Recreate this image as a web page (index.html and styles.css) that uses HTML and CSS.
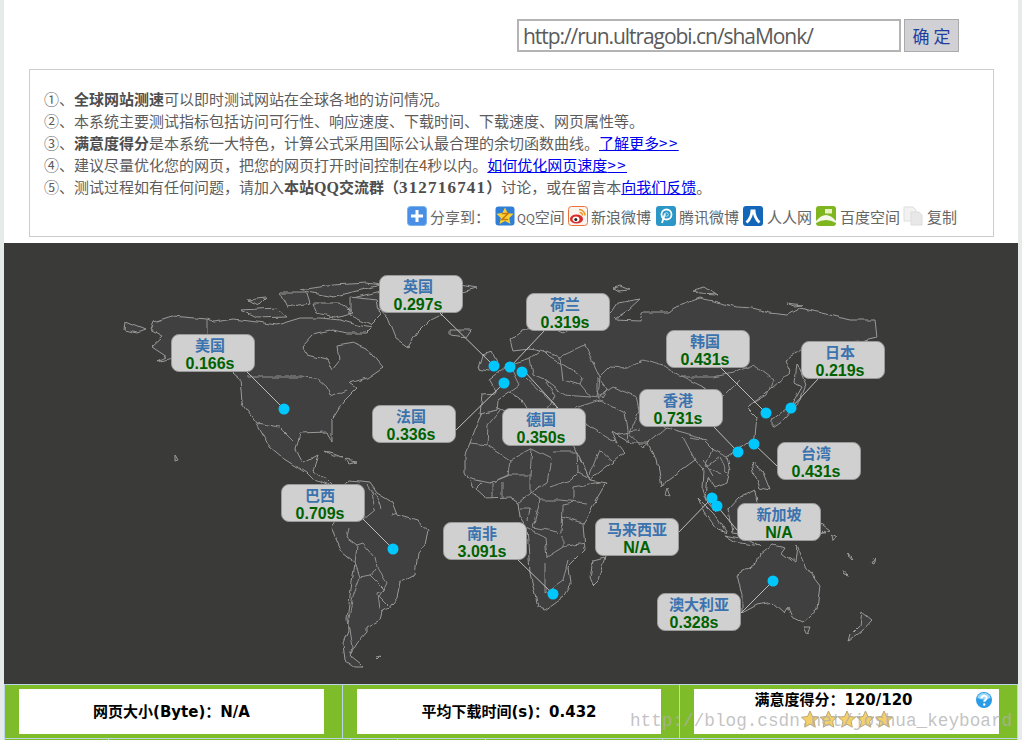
FILE: index.html
```html
<!DOCTYPE html>
<html lang="zh">
<head>
<meta charset="utf-8">
<title>全球网站测速</title>
<link rel="stylesheet" href="styles.css">
</head>
<body>
<main class="page">
  <form class="search">
    <input class="url" type="text" value="http://run.ultragobi.cn/shaMonk/">
    <button class="go" type="button">确 定</button>
  </form>

  <section class="info">
    <p>①、<b>全球网站测速</b>可以即时测试网站在全球各地的访问情况。</p>
    <p>②、本系统主要测试指标包括访问可行性、响应速度、下载时间、下载速度、网页属性等。</p>
    <p>③、<b>满意度得分</b>是本系统一大特色，计算公式采用国际公认最合理的余切函数曲线。<a href="#">了解更多<span class="gt">&gt;&gt;</span></a></p>
    <p>④、建议尽量优化您的网页，把您的网页打开时间控制在<b class="four">4</b>秒以内。<a href="#">如何优化网页速度<span class="gt">&gt;&gt;</span></a></p>
    <p>⑤、测试过程如有任何问题，请加入<b>本站<span class="ser">QQ</span>交流群（<span class="ser qq">312716741</span>）</b>讨论，或在留言本<a href="#">向我们反馈</a>。</p>
    <div class="share">
      <svg class="ic" viewBox="0 0 20 20"><rect x=".5" y=".5" width="19" height="19" rx="3" fill="#4a8fe6" stroke="#7ab0ee"/><path d="M10 4v12M4 10h12" stroke="#fff" stroke-width="3"/></svg>
      <span class="st s1">分享到：</span>
      <svg class="ic" viewBox="0 0 20 20"><rect x=".5" y=".5" width="19" height="19" rx="3" fill="#2f7fd6"/><path d="M10 1.500l2.600 5.600 6 .7-4.400 4.100 1.200 6L10 15l-5.400 2.900 1.200-6L1.400 7.800l6-.7z" fill="#fbd033"/><path d="M7 7.500h6l-6 6h6" fill="none" stroke="#c6790e" stroke-width="1.600"/></svg>
      <span class="st s2"><small>QQ</small>空间</span>
      <svg class="ic" viewBox="0 0 20 20"><rect x=".5" y=".5" width="19" height="19" rx="3" fill="#fbf3ee" stroke="#e8743b"/><ellipse cx="8.500" cy="13" rx="6.500" ry="4.600" fill="#d92a2a"/><ellipse cx="8" cy="13.300" rx="3.400" ry="2.700" fill="#fff"/><circle cx="7.800" cy="13.500" r="1.500" fill="#222"/><path d="M11 3.500a6 6 0 0 1 6 6M11.500 6.500a3 3 0 0 1 3 3" fill="none" stroke="#f09a28" stroke-width="1.500"/></svg>
      <span class="st s3">新浪微博</span>
      <svg class="ic" viewBox="0 0 20 20"><rect width="20" height="20" rx="3" fill="#2a97c6"/><path d="M6 17l3-9.500" stroke="#fff" stroke-width="1.800"/><circle cx="10.500" cy="8.500" r="5" fill="none" stroke="#fff" stroke-width="1.800"/><circle cx="10.500" cy="8.500" r="1.800" fill="none" stroke="#bfe6f5"/></svg>
      <span class="st s4">腾讯微博</span>
      <svg class="ic" viewBox="0 0 20 20"><rect width="20" height="20" rx="3" fill="#1467b8"/><path d="M9 3.500C9 9 7.500 13 3.500 16.500M11 3.500C11 9 12.500 13 16.500 16.500" fill="none" stroke="#fff" stroke-width="2.800"/></svg>
      <span class="st s5">人人网</span>
      <svg class="ic" viewBox="0 0 20 20"><rect width="20" height="20" rx="3" fill="#7fb51e"/><path d="M0 15q5-6 10-6t10 6v2q-5-3-10-3T0 17z" fill="#f4f8ea"/><rect x="9" y="3" width="7" height="4.500" fill="#e6f2c4"/></svg>
      <span class="st s6">百度空间</span>
      <svg class="ic" viewBox="0 0 20 20"><path d="M1 1h9l3 3v11H1z" fill="#f2f2f2" stroke="#ddd"/><path d="M8 6h8l3 3v10H8z" fill="#e8e8e8" stroke="#ddd"/></svg>
      <span class="st s7">复制</span>
    </div>
  </section>

  <section class="map">
    <svg class="world" viewBox="4 243 1014 441">
      <defs>
        <filter id="rough" filterUnits="userSpaceOnUse" x="4" y="243" width="1014" height="441" color-interpolation-filters="sRGB">
          <feTurbulence type="fractalNoise" baseFrequency=".09" numOctaves="2" seed="4" result="n"/>
          <feDisplacementMap in="SourceGraphic" in2="n" scale="5" xChannelSelector="R" yChannelSelector="G"/>
          <feGaussianBlur stdDeviation=".25"/>
        </filter>
      </defs>
      <g filter="url(#rough)">
      <g class="land">
        <path d="M153 322L172 316L207 319L215 322L233 319L257 322L277 325L300 318L320 318L340 320L357 325L372 328L367 333L347 333L333 330L313 335L302 347L307 355L327 360L332 370L340 360L338 345L353 342L367 348L383 367L367 378L350 383L357 388L343 402L332 420L332 443L327 432L300 433L296 450L303 463L318 455L313 470L327 480L335 488L327 484L312 478L307 473L282 457L270 447L257 423L242 403L240 378L233 372L210 350L157 362L167 357L152 347L163 337L150 330Z"/>
        <path d="M350 481L370 483L377 493L392 502L397 515L417 521L428 530L425 545L418 553L415 575L400 583L397 597L388 608L382 612L380 620L367 627L367 632L358 642L350 655L360 663L364 667L355 667L345 660L343 643L348 630L347 617L355 563L342 553L331 527L337 518L335 490Z"/>
        <path d="M485 403L470 443L465 455L465 472L473 487L485 498L510 497L518 502L520 517L527 528L530 573L538 608L545 610L563 597L570 585L568 567L585 550L583 523L587 517L607 483L590 480L577 453L570 433L555 418L530 415L502 410Z"/>
        <path d="M510 340L523 330L545 325L563 333L585 322L606 318L612 312L618 303L640 299L628 310L614 320L640 321L643 312L668 312L673 308L700 298L717 302L737 307L753 308L770 313L787 315L800 308L830 315L850 320L875 320L877 338L860 342L830 344L812 345L800 350L785 360L790 372L778 383L760 398L747 407L757 417L755 437L738 450L727 457L730 470L727 483L715 488L708 477L706 497L716 512L708 503L703 490L704 470L695 460L668 480L662 488L657 460L647 443L630 443L612 432L617 443L625 452L613 462L590 480L577 453L565 428L558 412L548 410L540 412L536 420L530 408L533 420L520 398L510 392L498 400L497 410L480 414L482 394L497 393L489 380L500 372L510 364L530 358L540 350L530 348L513 350Z"/>
        <path d="M737 575L757 563L760 555L773 545L785 548L782 553L795 563L797 545L805 565L820 585L817 610L803 622L792 617L788 608L785 613L773 602L757 605L742 613L742 595Z"/>
        <path d="M385 290L460 285L477 288L462 292L450 305L440 315L430 320L417 333L408 347L395 338L387 318L380 310L353 298Z"/>
        <path d="M605 557L598 580L593 585L590 577L593 560Z"/>
        <path d="M450 330L472 330L467 337L450 335ZM492 352L497 362L490 370L478 368L482 355ZM125 322L145 330L137 333L124 330ZM247 300L267 298L260 305ZM240 310L277 308L287 317L257 318ZM280 293L307 293L310 303L287 307ZM300 290L333 285L367 283L380 285L333 297L313 293ZM313 303L340 303L353 313L333 317L317 313ZM350 297L377 300L380 315L370 325L350 315ZM797 363L795 383L802 387L793 403L772 420L772 427L785 418L800 400L806 385ZM698 498L715 515L727 533L718 530L704 512ZM728 510L740 497L755 490L758 510L745 535L732 533ZM724 535L750 540L760 546L735 542ZM752 462L762 470L770 490L760 488L755 475ZM862 612L872 620L863 630L848 642L850 635L860 625ZM803 627L810 627L807 635ZM770 520L810 515L830 530L810 538L785 530ZM325 450L343 457L333 456ZM345 460L357 462L348 464ZM613 288L620 286L630 290L618 291ZM692 290L705 287L717 295L700 294ZM787 303L803 305L795 306ZM823 530L826 533L822 533ZM831 535L836 538L832 541ZM848 553L852 559L849 558ZM871 564L875 558L873 565ZM843 570L850 576L845 575ZM376 657L381 656L378 659ZM175 455L178 460L175 461Z"/>
      </g>
      <path class="borders" d="M207 319V334M247 377H300L317 378L327 387L330 397L347 390M257 423L280 427L293 440M348 528L346 537L357 545L363 543L375 557L377 567L387 583L380 597L388 605M357 545L355 563L360 577L370 575L375 568M360 577L352 600L348 623L352 647L350 657M370 575L378 583L385 590L378 593L380 610M375 493L380 502L382 508M367 485L372 492L375 510L363 520M392 515L397 513M487 445L510 460L532 448M510 460L508 475L530 475L532 448M532 448L552 458L548 483L530 493M552 452H577L578 472L570 480L550 487M467 478L490 483L508 475M493 483V498M502 483V497M530 475V493L518 503M540 500H560L587 503M573 487V500M540 500L533 527L562 533L563 505L573 503M562 517L583 523M527 528L545 537L547 558M545 563V593L563 580L568 560M547 557L563 547L585 543M563 537V547M520 508H530L528 522M600 377L610 367L627 368L643 359L663 365L682 377L713 377L733 373L753 365L773 380L767 395L747 407M682 377L723 397L740 380M640 410L630 433M667 428L700 437L713 450L727 457M600 377L598 397L613 387L637 397L640 410L667 428M600 400L625 413L628 430L627 443M628 433L643 447L667 427M683 437L695 460M703 460L713 477M707 467L720 457L728 473M597 377L607 390L602 398L597 390ZM543 350L550 357L567 367L583 377L580 385L590 397L600 398M525 377L557 407M530 358L533 375L545 380L555 395L548 410M560 357L563 380L580 385M510 364L520 385L510 392M577 425L587 425L617 443M587 425L578 412L558 412M590 475L600 450L613 462M667 488L670 497L665 495ZM540 350L560 357L585 345L600 377M545 380L565 395L590 397M575 408L600 400M615 435L640 430M650 405L680 395L700 415L723 397M690 437L708 440M712 450L705 467L722 475M470 443L487 445L488 425L500 410M510 475L490 483M475 490L482 483M540 500L530 493M578 472L590 478M573 487L600 482"/>
      </g>
      <g class="leader">
        <path d="M247 372L284 409M440 313L494 366M545 330L510 367M525 372L558 408M456 430L504 383M721 368L766 413M818 379L791 408M713 426L738 452M777 466L754 444M363 519L393 549M518 560L553 594M678 533L712 498M737 530L717 506M741 613L773 581"/>
      </g>
      <g class="pin">
        <circle cx="284" cy="409" r="5.500"/><circle cx="494" cy="366" r="5.500"/><circle cx="510" cy="367" r="5.500"/><circle cx="522" cy="372" r="5.500"/><circle cx="504" cy="383" r="5.500"/><circle cx="791" cy="408" r="5.500"/><circle cx="766" cy="413" r="5.500"/><circle cx="738" cy="452" r="5.500"/><circle cx="754" cy="444" r="5.500"/><circle cx="393" cy="549" r="5.500"/><circle cx="553" cy="594" r="5.500"/><circle cx="712" cy="498" r="5.500"/><circle cx="717" cy="506" r="5.500"/><circle cx="773" cy="581" r="5.500"/>
      </g>
    </svg>
    <div class="tag us"><b>美国</b><i>0.166s</i></div>
    <div class="tag uk"><b>英国</b><i>0.297s</i></div>
    <div class="tag nl"><b>荷兰</b><i>0.319s</i></div>
    <div class="tag fr"><b>法国</b><i>0.336s</i></div>
    <div class="tag de"><b>德国</b><i>0.350s</i></div>
    <div class="tag kr"><b>韩国</b><i>0.431s</i></div>
    <div class="tag jp"><b>日本</b><i>0.219s</i></div>
    <div class="tag hk"><b>香港</b><i>0.731s</i></div>
    <div class="tag tw"><b>台湾</b><i>0.431s</i></div>
    <div class="tag br"><b>巴西</b><i>0.709s</i></div>
    <div class="tag za"><b>南非</b><i>3.091s</i></div>
    <div class="tag wide my"><b>马来西亚</b><i>N/A</i></div>
    <div class="tag wide sg"><b>新加坡</b><i>N/A</i></div>
    <div class="tag wide au"><b>澳大利亚</b><i>0.328s</i></div>
  </section>

  <section class="stats">
    <div class="cell"><div class="box">网页大小(Byte)：N/A</div></div>
    <div class="cell"><div class="box">平均下载时间(s)：0.432</div></div>
    <div class="cell"><div class="box score">
      <span class="score-text">满意度得分：120/120</span>
      <svg class="stars" viewBox="0 0 92 18">
        <defs><path id="star" d="M9 1l2.500 5.500 6 .7-4.400 4 1.200 6L9 14.200l-5.300 3 1.200-6-4.400-4 6-.7z"/></defs>
        <use href="#star"/><use href="#star" x="18.500"/><use href="#star" x="37"/><use href="#star" x="55.500"/><use href="#star" x="74"/>
      </svg>
      <svg class="help" viewBox="0 0 16 16"><circle cx="8" cy="8" r="8" fill="#2a9be6"/><path d="M1.500 6a6.500 5 0 0 1 13 0q-6.500 3-13 0z" fill="#9bd8fa"/><path d="M5.500 6.200c0-3.200 5.200-3.200 5.200-.2 0 1.800-2.500 2-2.500 3.800" fill="none" stroke="#fff" stroke-width="2"/><circle cx="8.200" cy="12.500" r="1.200" fill="#fff"/></svg>
    </div></div>
  </section>
  <div class="next"><span></span><span></span><span></span><span></span><span></span><span></span><span></span></div>
  <div class="mark">http://blog.csdn.net/joshua_keyboard</div>
</main>
</body>
</html>
```

FILE: styles.css
```css
html, body {
  margin: 0;
  height: 740px;
  overflow: hidden;
  background: #e6ebe9;
}
.page {
  position: relative;
  width: 1014px;
  height: 740px;
  margin-left: 4px;
  background: #fff;
  font-family: "Noto Sans CJK SC", "Liberation Sans", sans-serif;
  overflow: hidden;
}
.search {
  display: flex;
  justify-content: flex-end;
  gap: 3px;
  height: 33px;
  padding: 19px 59px 0 0;
  margin: 0;
}
.url {
  box-sizing: border-box;
  width: 384px;
  height: 33px;
  padding: 1px 0 0 4px;
  border: 2px solid #b4b4b4;
  border-radius: 0;
  font: 21px "Open Sans", sans-serif;
  letter-spacing: -1.050px;
  color: #5a5a5a;
  outline: none;
}
.go {
  box-sizing: border-box;
  width: 55px;
  height: 33px;
  padding: 0;
  background: #d1d0d5;
  border: 1px solid #aaa;
  border-radius: 0;
  color: #1f3f9e;
  font: 17px "Noto Sans CJK SC", sans-serif;
}
.info {
  box-sizing: border-box;
  width: 965px;
  height: 168px;
  margin: 17px 0 6px 25px;
  padding: 18px 14px 0;
  border: 1px solid #ccc;
  font-size: 15px;
  color: #5c5c5c;
}
.info p {
  margin: 0;
  height: 22px;
  line-height: 22px;
  white-space: nowrap;
}
.info b { color: #4d4d4d; }
.info a { color: #00e; text-decoration: underline; }
.gt { letter-spacing: 1.500px; }
.four { color: #8a5a2a !important; font-weight: 400; }
.ser { font-family: "Liberation Serif", serif; font-size: 16px; }
.qq { letter-spacing: 1.200px; font-size: 17px; }
.share {
  display: flex;
  align-items: center;
  height: 22px;
  margin: 8px 24px 0 0;
  justify-content: flex-end;
  color: #666;
  font-size: 15px;
  line-height: 22px;
}
.ic { width: 20px; height: 20px; flex: none; margin-top: -2px; }
.st { white-space: nowrap; margin-left: 3px; }
.s1 { margin-right: 9px; width: 56px; }
.s2 { margin-right: 5px; margin-left: 2px; width: 46px; }
.s2 small { font-size: 12px; }
.s3 { margin-right: 5px; width: 60px; }
.s4 { margin-right: 5px; width: 59px; }
.s5 { margin-right: 5px; margin-left: 4px; width: 44px; }
.s6 { margin-right: 5px; margin-left: 4px; width: 58px; }
.s7 { margin-left: 4px; width: 28px; }
.map {
  position: relative;
  height: 441px;
  background: #3a3b38;
}
.world { display: block; width: 1014px; height: 441px; }
.land path { fill: #414040; stroke: #9a9a9a; stroke-width: 1; stroke-linejoin: round; }
.borders { fill: none; stroke: #929292; stroke-width: 1; stroke-linejoin: round; }
.leader path { fill: none; stroke: #bdbdbd; stroke-width: 1; }
.pin circle { fill: #00c8ff; }
.tag {
  position: absolute;
  box-sizing: border-box;
  width: 84px;
  height: 38px;
  padding: 1px 6px 0 0;
  background: #d0d0d0;
  border: 1px solid #9a9a9a;
  border-radius: 8px;
  display: flex;
  flex-direction: column;
  align-items: center;
  text-align: center;
}
.tag.wide { padding-right: 0; }
.tag b {
  display: block;
  height: 18px;
  font-size: 15px;
  line-height: 18px;
  color: #3b73ae;
}
.tag i {
  display: block;
  height: 17px;
  margin-top: 1px;
  font: bold 16px/17px "Liberation Sans", sans-serif;
  color: #006100;
}
.au i { margin-right: 10px; }
.us { left: 167px; top: 91px; }
.uk { left: 375px; top: 32px; }
.nl { left: 522px; top: 50px; }
.fr { left: 368px; top: 162px; }
.de { left: 498px; top: 165px; }
.kr { left: 662px; top: 87px; }
.jp { left: 797px; top: 98px; }
.hk { left: 635px; top: 146px; }
.tw { left: 773px; top: 199px; }
.br { left: 277px; top: 241px; }
.za { left: 439px; top: 279px; }
.my { left: 591px; top: 275px; }
.sg { left: 733px; top: 260px; }
.au { left: 653px; top: 350px; }
.stats {
  display: grid;
  grid-template-columns: 337px 336px 337px;
  gap: 1px;
  height: 53px;
  padding: 0 1px;
  background: #b9d5e6;
  border-top: 1px solid #b9d5e6;
  border-bottom: 1px solid #b9d5e6;
}
.cell {
  padding: 4px 18px 4px 14px;
  background: #7fbc29;
}
.box {
  height: 45px;
  background: #fff;
  display: flex;
  align-items: center;
  justify-content: center;
  font: bold 15px/20px "DejaVu Sans", "Noto Sans CJK SC", sans-serif;
  color: #000;
  white-space: nowrap;
}
.score {
  position: relative;
  flex-direction: column;
  justify-content: flex-start;
  padding-top: 1px;
  box-sizing: border-box;
}
.score-text { margin-right: 26px; }
.stars { width: 92px; height: 18px; margin-top: 0; fill: #f5cf68; stroke: #b9a77c; stroke-width: 1; }
.help { position: absolute; right: 7px; top: 3px; width: 16px; height: 16px; }
.next {
  display: grid;
  grid-template-columns: 103px 241px 46px 87px 176px 39px 1fr;
  gap: 1px;
  height: 6px;
  padding: 0 1px;
  background: #b9d5e6;
}
.next span { background: #7fbc29; }
.mark {
  position: absolute;
  left: 626px;
  top: 710px;
  font: 17.700px/22px "Liberation Mono", monospace;
  color: rgba(175, 175, 175, .75);
  white-space: nowrap;
}
```
